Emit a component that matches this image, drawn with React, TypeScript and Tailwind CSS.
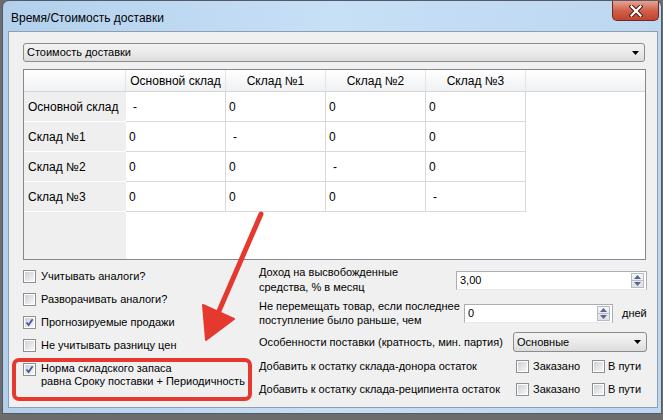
import React from "react";

const cols = ["Основной склад", "Склад №1", "Склад №2", "Склад №3"];
const rows = [
  { name: "Основной склад", cells: ["-", "0", "0", "0"] },
  { name: "Склад №1", cells: ["0", "-", "0", "0"] },
  { name: "Склад №2", cells: ["0", "0", "-", "0"] },
  { name: "Склад №3", cells: ["0", "0", "0", "-"] },
];

const CheckBox = ({ checked = false }: { checked?: boolean }) => (
  <span className="relative flex h-[13px] w-[13px] shrink-0 items-center justify-center border border-[#8e8f8f] bg-white">
    <span className="h-[9px] w-[9px] bg-linear-to-br from-[#cdd1d7] to-[#f7f7f7]" />
    {checked && (
      <svg className="absolute left-0 top-0" width="11" height="11" viewBox="0 0 11 11">
        <path d="M2.5 5.5 L4.6 8 L8.6 2.2" stroke="#42549a" strokeWidth="1.7" fill="none" />
      </svg>
    )}
  </span>
);

const Arrow = () => (
  <svg width="7" height="4" viewBox="0 0 7 4" className="shrink-0">
    <path d="M0 0 H7 L3.5 4 Z" fill="#000" />
  </svg>
);

const Combo = ({ text, className }: { text: string; className: string }) => (
  <div className={"flex items-center rounded-[3px] border border-[#8c8c8c] bg-linear-to-b from-[#f3f3f3] via-[#ebebeb] to-[#dcdcdc] pl-[3px] pr-[5px] text-[11px] " + className}>
    <span className="flex-1 leading-none">{text}</span>
    <Arrow />
  </div>
);

const Spinner = () => (
  <div className="flex h-[15px] w-[13px] shrink-0 flex-col border border-[#b7bbc3] bg-linear-to-b from-[#f6f6f6] to-[#dfe1e4]">
    <div className="flex flex-1 items-center justify-center border-b border-[#b7bbc3]">
      <svg width="7" height="4" viewBox="0 0 7 4">
        <path d="M0 4 L3.5 0 L7 4 Z" fill="#56688f" />
      </svg>
    </div>
    <div className="flex flex-1 items-center justify-center">
      <svg width="7" height="4" viewBox="0 0 7 4">
        <path d="M0 0 H7 L3.5 4 Z" fill="#56688f" />
      </svg>
    </div>
  </div>
);

const NumInput = ({ value, className }: { value: string; className: string }) => (
  <div className={"flex h-[19px] shrink-0 items-center border border-[#abadb3] border-b-[#e3e9ef] bg-white pl-[3px] pr-[2px] " + className}>
    <span className="flex-1 leading-none">{value}</span>
    <Spinner />
  </div>
);

const CloseButton = () => (
  <div className="mr-[2px] flex h-[20px] w-[47px] items-center justify-center rounded-b-[5px] border border-t-0 border-[#6b2a20] bg-linear-to-b from-[#e7a393] via-[#d0614b] to-[#c0432d]">
    <svg width="14" height="12" viewBox="0 0 14 12">
      <path d="M2.5 1.5 L11.5 10.5 M11.5 1.5 L2.5 10.5" stroke="#4a1c16" strokeWidth="4.2" strokeLinecap="square" />
      <path d="M2.5 1.5 L11.5 10.5 M11.5 1.5 L2.5 10.5" stroke="#ffffff" strokeWidth="2.2" strokeLinecap="square" />
    </svg>
  </div>
);

const Table = () => (
  <div className="mt-[7px] flex h-[191px] shrink-0 flex-col border border-[#828790] bg-white">
    <div className="flex h-[22px] shrink-0 border-b border-[#d5d5d5] bg-linear-to-b from-[#ffffff] to-[#f0f1f3]">
      <div className="w-[102px] border-r border-[#e3e4e6]" />
      {cols.map((c) => (
        <div key={c} className="flex w-[100px] items-center justify-center border-r border-[#e3e4e6]">
          {c}
        </div>
      ))}
    </div>
    {rows.map((r) => (
      <div key={r.name} className="flex h-[30px] shrink-0">
        <div className="flex w-[102px] items-center whitespace-nowrap border-b border-white bg-[#efefef] pl-[4px]">{r.name}</div>
        {r.cells.map((v, i) => (
          <div
            key={i}
            className={
              "flex w-[100px] items-center border-b border-r border-[#d9d9d9] " +
              (v === "-" ? "pl-[7px]" : "pl-[3px]")
            }
          >
            {v}
          </div>
        ))}
      </div>
    ))}
    <div className="flex flex-1">
      <div className="w-[102px] bg-[#efefef]" />
    </div>
  </div>
);

export default function App() {
  return (
    <div className="relative h-[420px] w-[663px] overflow-hidden bg-[#6c6c6c] font-['Liberation_Sans',Arial,sans-serif] text-[12px] text-black">
      <div className="ml-[2px] flex h-[414px] w-[660px] flex-col rounded-t-[7px] border border-[#505a68] bg-linear-to-r from-[#b2d0ec] via-[#c8e0f6] to-[#bcd7f0]">
        <div className="flex h-[30px] shrink-0 items-start justify-between pl-[8px]">
          <span className="mt-[9px] leading-[16px]">Время/Стоимость доставки</span>
          <CloseButton />
        </div>
        <div className="ml-[5px] mr-[3px] flex h-[377px] flex-col border border-[#8e9db0] bg-[#f0f0f0] pl-[14px] pr-[11px] pt-[11px]">
          <Combo text="Стоимость доставки" className="mr-[1px] h-[19px] shrink-0" />
          <Table />
          <div className="flex flex-1 text-[11px]">
            <div className="flex w-[236px] shrink-0 flex-col pt-[5px]">
              {[
                ["Учитывать аналоги?", false],
                ["Разворачивать аналоги?", false],
                ["Прогнозируемые продажи", true],
                ["Не учитывать разницу цен", false],
              ].map(([t, c]) => (
                <div key={t as string} className="flex h-[23px] items-center gap-[5px]">
                  <CheckBox checked={c as boolean} />
                  <span>{t as string}</span>
                </div>
              ))}
              <div className="mt-[5px] flex items-start gap-[5px] whitespace-nowrap leading-[13px]">
                <span className="mt-[1px]">
                  <CheckBox checked />
                </span>
                <span>
                  Норма складского запаса
                  <br />
                  равна Сроку поставки + Периодичность
                </span>
              </div>
            </div>
            <div className="flex min-w-0 flex-1 flex-col whitespace-nowrap pt-[5px]">
              <div className="flex items-center">
                <span className="leading-[15px]">
                  Доход на высвобожденные
                  <br />
                  средства, % в месяц
                </span>
                <NumInput value="3,00" className="ml-auto mr-[-1px] w-[191px]" />
              </div>
              <div className="mt-[4px] flex items-center">
                <span className="w-[205px] shrink-0 leading-[14px]">
                  Не перемещать товар, если последнее
                  <br />
                  поступление было раньше, чем
                </span>
                <NumInput value="0" className="w-[149px]" />
                <span className="ml-[9px]">дней</span>
              </div>
              <div className="mt-[4px] flex h-[22px] items-center">
                <span>Особенности поставки (кратность, мин. партия)</span>
                <Combo text="Основные" className="ml-auto mr-[-1px] h-[20px] w-[134px] shrink-0" />
              </div>
              {["Добавить к остатку склада-донора остаток", "Добавить к остатку склада-реципиента остаток"].map((t, i) => (
                <div key={t} className={"flex h-[23px] items-center " + (i === 0 ? "mt-[2px]" : "")}>
                  <span className="w-[257px] shrink-0">{t}</span>
                  <div className="flex w-[76px] shrink-0 items-center gap-[4px]">
                    <CheckBox />
                    <span>Заказано</span>
                  </div>
                  <div className="flex items-center gap-[3px]">
                    <CheckBox />
                    <span>В пути</span>
                  </div>
                </div>
              ))}
            </div>
          </div>
        </div>
      </div>

      {/* annotation: red frame + arrow */}
      <div className="pointer-events-none absolute left-[12px] top-[358px] h-[43px] w-[240px] rounded-[7px] border-[4px] border-[#e5392f]" />
      <svg className="pointer-events-none absolute left-0 top-0" width="663" height="420" viewBox="0 0 663 420">
        <path d="M261 214 L219 311" stroke="#e5392f" strokeWidth="5" strokeLinecap="round" />
        <path d="M206 340 L203 305 L234 319 Z" fill="#e5392f" stroke="#e5392f" strokeWidth="2" strokeLinejoin="round" />
      </svg>
    </div>
  );
}
